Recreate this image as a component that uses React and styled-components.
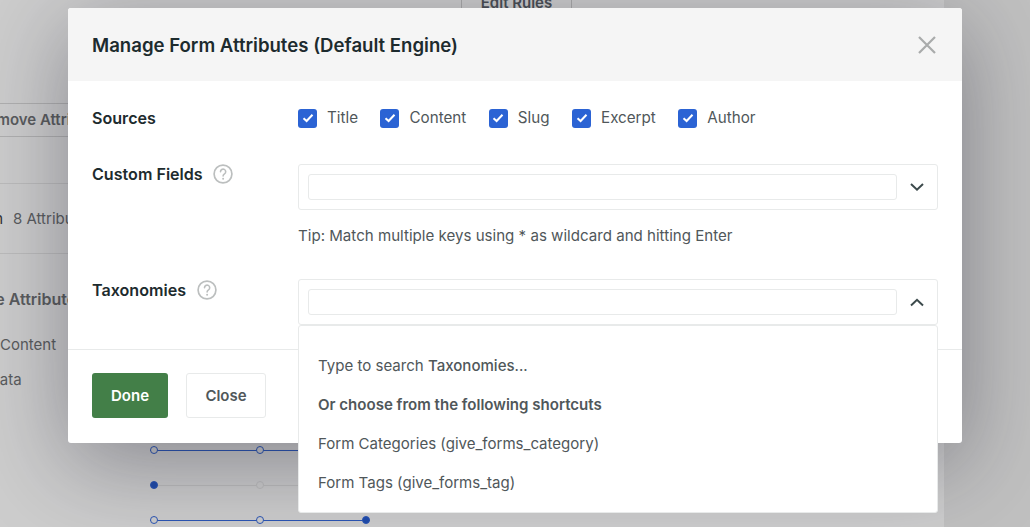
import React from 'react'
import styled, { createGlobalStyle } from 'styled-components'

const sources = ['Title', 'Content', 'Slug', 'Excerpt', 'Author']

function Timeline({ marks, dimmed, top }) {
    return (
        <TrackRow $top={top}>
            <Track $dimmed={dimmed}>
                {marks.map((mark, i) => (
                    <Dot key={i} $kind={mark} />
                ))}
            </Track>
        </TrackRow>
    )
}

function Help() {
    return (
        <HelpIcon width="20" height="20" viewBox="0 0 20 20" fill="none">
            <circle cx="10" cy="10" r="8.9" stroke="#bcbfbf" strokeWidth="1.7" />
            <path d="M7.5 7.8a2.6 2.6 0 1 1 4 2.1c-.9.6-1.4 1-1.4 2.1" stroke="#bcbfbf" strokeWidth="1.6" strokeLinecap="round" />
            <circle cx="10.1" cy="14.7" r="1" fill="#bcbfbf" />
        </HelpIcon>
    )
}

function Chevron({ up }) {
    return (
        <ChevronBox>
            <svg width="14" height="9" viewBox="0 0 14 9" fill="none">
                <path d={up ? 'M1 7.5L7 1.8L13 7.5' : 'M1 1L7 6.7L13 1'} stroke="#3c4a4c" strokeWidth="2" />
            </svg>
        </ChevronBox>
    )
}

function Select({ up }) {
    return (
        <SelectBox>
            <SearchInput />
            <Chevron up={up} />
        </SelectBox>
    )
}

export default function App() {
    return (
        <>
            <GlobalStyle />
            <Page>
                <Backdrop>
                    <EditRules>Edit Rules</EditRules>
                    <RemoveButton>Remove Attributes</RemoveButton>
                    <SummaryRow>
                        <SummaryEnd>n</SummaryEnd>
                        <SummaryText>8 Attributes</SummaryText>
                    </SummaryRow>
                    <SectionTitle>Source Attributes</SectionTitle>
                    <SourceName>Content</SourceName>
                    <SourceName $clip>Meta Data</SourceName>
                    <Timeline top={57} marks={['open', 'open', 'none']} />
                    <Timeline top={27} dimmed marks={['solid', 'faint', 'none']} />
                    <Timeline top={27} marks={['open', 'open', 'solid']} />
                </Backdrop>
                <Sidebar />

                <Modal>
                    <ModalHeader>
                        <ModalTitle>Manage Form Attributes (Default Engine)</ModalTitle>
                        <CloseIcon width="20" height="20" viewBox="0 0 20 20" fill="none">
                            <path d="M2 2L18 18M18 2L2 18" stroke="#a9abab" strokeWidth="2.2" />
                        </CloseIcon>
                    </ModalHeader>
                    <ModalBody>
                        <SourcesRow>
                            <FieldLabel>Sources</FieldLabel>
                            <Checks>
                                {sources.map(name => (
                                    <CheckItem key={name}>
                                        <CheckBox>
                                            <svg width="12" height="10" viewBox="0 0 12 10" fill="none">
                                                <path d="M1.5 5.2L4.6 8L10.5 1.8" stroke="#fff" strokeWidth="2" />
                                            </svg>
                                        </CheckBox>
                                        {name}
                                    </CheckItem>
                                ))}
                            </Checks>
                        </SourcesRow>
                        <FieldRow>
                            <FieldLabel>Custom Fields <Help /></FieldLabel>
                            <div>
                                <Select />
                                <Tip>Tip: Match multiple keys using * as wildcard and hitting Enter</Tip>
                            </div>
                        </FieldRow>
                        <TaxonomyRow>
                            <FieldLabel $nudge>Taxonomies <Help /></FieldLabel>
                            <Select up />
                        </TaxonomyRow>
                    </ModalBody>
                    <ModalFooter>
                        <DoneButton>Done</DoneButton>
                        <CloseButton>Close</CloseButton>
                    </ModalFooter>
                    <Dropdown>
                        <DropdownItem>Type to search <strong>Taxonomies</strong>...</DropdownItem>
                        <DropdownItem $bold>Or choose from the following shortcuts</DropdownItem>
                        <DropdownItem>Form Categories (give_forms_category)</DropdownItem>
                        <DropdownItem>Form Tags (give_forms_tag)</DropdownItem>
                    </Dropdown>
                </Modal>
            </Page>
        </>
    )
}

const GlobalStyle = createGlobalStyle`
    html, body {
        margin: 0;
        padding: 0;
        background: #c9c9c9;
    }
    * {
        box-sizing: border-box;
    }
`

const Page = styled.div`
    position: relative;
    display: grid;
    grid-template-columns: 944px 1fr;
    width: 1030px;
    height: 527px;
    overflow: hidden;
    font-family: Inter, "Liberation Sans", sans-serif;
`

const Backdrop = styled.div`
    background: #cdcdcd;
    color: #5a5c5e;
    overflow: hidden;
    font-size: 15px;
`

const Sidebar = styled.div`
    background: #c0c0c0;
`

const EditRules = styled.div`
    width: 111px;
    height: 14px;
    margin: -5px 0 0 461px;
    border-left: 1px solid #aaa;
    border-right: 1px solid #aaa;
    text-align: center;
    font-weight: 600;
    font-size: 15px;
    line-height: 16px;
    color: #4a4f55;
`

const RemoveButton = styled.div`
    width: 200px;
    height: 34px;
    margin: 94px 0 0 -22px;
    border-top: 1px solid #b0b0b0;
    border-bottom: 1px solid #b0b0b0;
    font-weight: 600;
    line-height: 32px;
    white-space: nowrap;
`

const SummaryRow = styled.div`
    display: flex;
    gap: 10px;
    align-items: center;
    height: 71px;
    margin-top: 46px;
    border-top: 1px solid #bcbcbc;
    border-bottom: 1px solid #bcbcbc;
`

const SummaryEnd = styled.span`
    width: 3px;
    overflow: hidden;
    direction: rtl;
    color: #333;
`

const SummaryText = styled.span`
    white-space: nowrap;
`

const SectionTitle = styled.div`
    margin: 35px 0 0 -50px;
    font-size: 16px;
    font-weight: 600;
    line-height: 20px;
    white-space: nowrap;
`

const SourceName = styled.div`
    margin-top: ${props => (props.$clip ? '17px' : '27px')};
    margin-left: ${props => (props.$clip ? '-51px' : '0')};
    line-height: 18px;
    white-space: nowrap;
`

const TrackRow = styled.div`
    margin: ${props => props.$top}px 0 0 150px;
    height: 8px;
`

const Track = styled.div`
    display: flex;
    justify-content: space-between;
    align-items: center;
    width: 220px;
    height: 8px;
    background: linear-gradient(${props => (props.$dimmed ? '#bdbdbd' : '#2b56b4')}, ${props => (props.$dimmed ? '#bdbdbd' : '#2b56b4')}) center / 100% 1px no-repeat;
`

const Dot = styled.span`
    width: 8px;
    height: 8px;
    border-radius: 50%;
    visibility: ${props => (props.$kind === 'none' ? 'hidden' : 'visible')};
    background: ${props => (props.$kind === 'solid' ? '#1f4bab' : '#cdcdcd')};
    border: 1.5px solid ${props => (props.$kind === 'faint' ? '#bdbdbd' : '#2b56b4')};
`

const Modal = styled.div`
    position: absolute;
    top: 8px;
    left: 68px;
    width: 894px;
    height: 435px;
    display: flex;
    flex-direction: column;
    background: #fff;
    border-radius: 3px;
    box-shadow: 0 20px 90px rgba(20, 20, 40, 0.38);
    color: #50575a;
`

const ModalHeader = styled.div`
    display: flex;
    justify-content: space-between;
    align-items: center;
    height: 73px;
    padding: 0 25px 0 24px;
    background: #f5f5f5;
    border-radius: 3px 3px 0 0;
`

const ModalTitle = styled.h2`
    margin: 0;
    font-size: 18.6px;
    font-weight: 600;
    color: #1d2b2e;
`

const CloseIcon = styled.svg`
    display: block;
`

const ModalBody = styled.div`
    flex: 1;
    padding: 0 24px;
`

const FieldRow = styled.div`
    display: grid;
    grid-template-columns: 206px 1fr;
    margin-top: 36px;
`

const SourcesRow = styled(FieldRow)`
    align-items: center;
    margin-top: 27px;
    height: 20px;
`

const TaxonomyRow = styled(FieldRow)`
    margin-top: 33px;
`

const FieldLabel = styled.label`
    display: flex;
    align-items: center;
    gap: 10.5px;
    height: 20px;
    margin-top: ${props => (props.$nudge ? '1px' : '0')};
    font-size: 16.1px;
    font-weight: 600;
    color: #1d2b2e;
`

const HelpIcon = styled.svg`
    flex: none;
`

const Checks = styled.div`
    display: flex;
    gap: 22.5px;
`

const CheckItem = styled.div`
    display: flex;
    align-items: center;
    gap: 10px;
    font-size: 15.2px;
    line-height: 20px;
`

const CheckBox = styled.span`
    display: flex;
    align-items: center;
    justify-content: center;
    width: 19px;
    height: 19px;
    border-radius: 3px;
    background: #2b63d4;
`

const SelectBox = styled.div`
    display: flex;
    align-items: center;
    height: 46px;
    padding-left: 9px;
    background: #fff;
    border: 1px solid #e8eaea;
    border-radius: 3px;
`

const SearchInput = styled.div`
    flex: 1;
    height: 26px;
    border: 1px solid #e8eaea;
    border-radius: 3px;
`

const ChevronBox = styled.div`
    display: flex;
    justify-content: center;
    width: 40px;
`

const Tip = styled.p`
    margin: 16px 0 0;
    font-size: 15.1px;
    line-height: 20px;
`

const ModalFooter = styled.div`
    display: flex;
    gap: 18px;
    height: 94px;
    padding: 23px 24px 0;
    border-top: 1px solid #e8eaea;
`

const DoneButton = styled.div`
    display: flex;
    align-items: center;
    justify-content: center;
    width: 76px;
    height: 45px;
    border-radius: 3px;
    background: #437f48;
    color: #fff;
    font-size: 15px;
    font-weight: 600;
`

const CloseButton = styled(DoneButton)`
    width: 80px;
    background: #fff;
    border: 1px solid #e8eaea;
    color: #50575a;
`

const Dropdown = styled.div`
    position: absolute;
    top: 317px;
    left: 230px;
    width: 640px;
    height: 188px;
    padding: 20px 19px 0;
    background: #fff;
    border: 1px solid #e8eaea;
    border-radius: 3px;
`

const DropdownItem = styled.div`
    height: 39px;
    font-size: 15.05px;
    line-height: 39px;
    font-weight: ${props => (props.$bold ? 600 : 400)};
    strong {
        font-weight: 500;
    }
`
